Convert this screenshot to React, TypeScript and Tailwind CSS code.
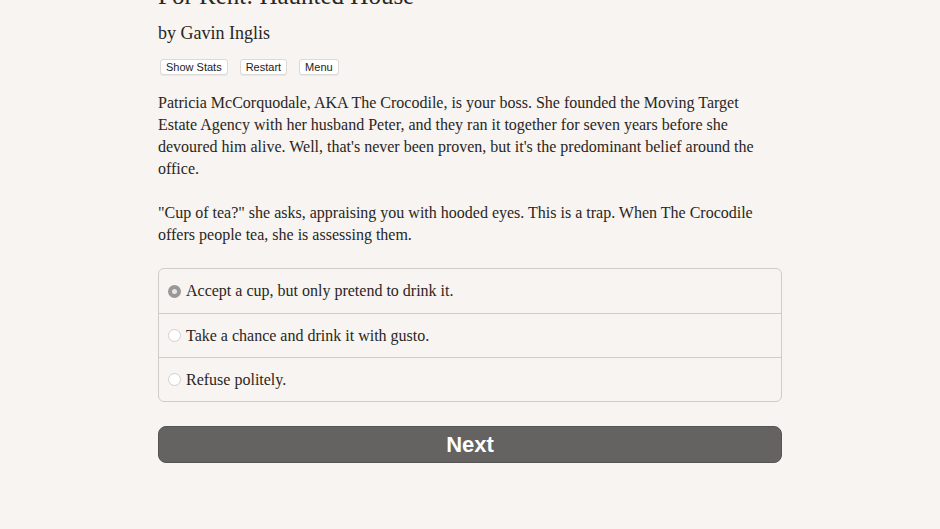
export default function App() {
  const serif = { fontFamily: '"Liberation Serif", "Times New Roman", serif' }
  const choices = [
    'Accept a cup, but only pretend to drink it.',
    'Take a chance and drink it with gusto.',
    'Refuse politely.',
  ]
  return (
    <div className="min-h-[529px] w-full overflow-hidden bg-[#f7f4f1] text-[#2a2623]" style={serif}>
      <div className="mx-auto w-[624px]">
        <h1 className="-mt-[19px] text-[25px] leading-[30px] font-normal">For Rent: Haunted House</h1>
        <div className="mt-[11px] text-[18px] leading-[22px]">by Gavin Inglis</div>

        <div className="mt-[15px] flex gap-[12px] pl-[2px]" style={{ fontFamily: '"Liberation Sans", Arial, sans-serif' }}>
          {['Show Stats', 'Restart', 'Menu'].map((b) => (
            <button
              key={b}
              className="h-[16px] rounded-[3px] border border-[#dcd9d6] bg-white px-[5px] text-[11px] leading-[14px] text-[#222] shadow-[0_1px_0_rgba(0,0,0,0.05)]"
            >
              {b}
            </button>
          ))}
        </div>

        <div className="mt-[17px] text-[16px] leading-[22px]">
          <p>
            Patricia McCorquodale, AKA The Crocodile, is your boss. She founded the Moving Target
            <br />
            Estate Agency with her husband Peter, and they ran it together for seven years before she
            <br />
            devoured him alive. Well, that's never been proven, but it's the predominant belief around the
            <br />
            office.
          </p>
          <p className="mt-[22px]">
            "Cup of tea?" she asks, appraising you with hooded eyes. This is a trap. When The Crocodile
            <br />
            offers people tea, she is assessing them.
          </p>
        </div>

        <div className="mt-[22px] overflow-hidden rounded-[6px] border border-[#cfccc9]">
          {choices.map((c, i) => (
            <div
              key={c}
              className={`flex h-[44px] items-center gap-[5px] pl-[9px] text-[16px] ${i > 0 ? 'border-t border-[#cfccc9]' : ''}`}
            >
              {i === 0 ? (
                <span className="flex h-[13px] w-[13px] items-center justify-center rounded-full bg-[#9a9896]">
                  <span className="h-[5px] w-[5px] rounded-full bg-[#e8e6e4]" />
                </span>
              ) : (
                <span className="h-[13px] w-[13px] rounded-full border border-[#d2d0ce] bg-white" />
              )}
              <span>{c}</span>
            </div>
          ))}
        </div>

        <button
          className="mt-[24px] flex h-[37px] w-full items-center justify-center rounded-[8px] border border-[#555453] bg-[#646362] text-[22px] font-bold text-white"
          style={{ fontFamily: '"Liberation Sans", Arial, sans-serif' }}
        >
          Next
        </button>
      </div>
    </div>
  )
}
